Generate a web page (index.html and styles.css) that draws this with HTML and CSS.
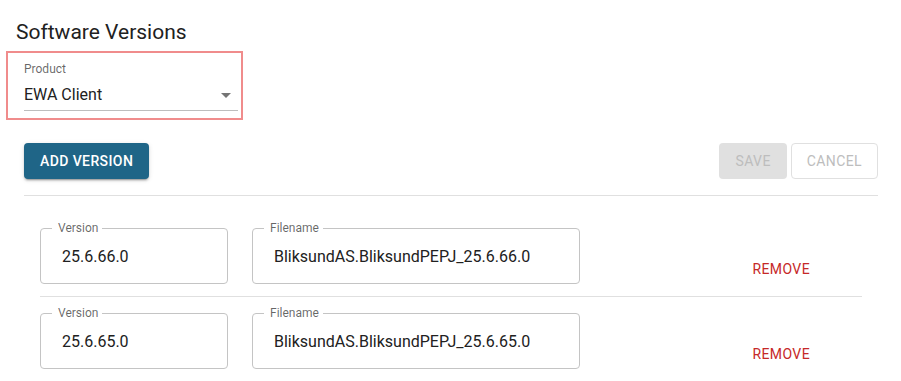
FILE: index.html
```html
<!DOCTYPE html>
<html lang="en">
<head>
<meta charset="utf-8">
<title>Software Versions</title>
<link rel="stylesheet" href="styles.css">
</head>
<body>
<div class="page">
  <h2 class="title">Software Versions</h2>
  <div class="product-box">
    <div class="select-label">Product</div>
    <div class="select-row">
      <span class="select-value">EWA Client</span>
      <svg class="select-arrow" viewBox="0 0 24 24" width="24" height="24" aria-hidden="true"><path d="M7 10l5 5 5-5z"/></svg>
    </div>
  </div>
  <div class="content">
    <div class="toolbar">
      <button class="btn btn-primary">Add version</button>
      <div class="toolbar-right">
        <button class="btn btn-disabled">Save</button>
        <button class="btn btn-outlined">Cancel</button>
      </div>
    </div>
    <div class="rows">
      <div class="row">
        <div class="field field-version">
          <span class="field-label">Version</span>
          <span class="field-value">25.6.66.0</span>
        </div>
        <div class="field field-filename">
          <span class="field-label">Filename</span>
          <span class="field-value">BliksundAS.BliksundPEPJ_25.6.66.0</span>
        </div>
        <button class="btn btn-remove">Remove</button>
      </div>
      <div class="row">
        <div class="field field-version">
          <span class="field-label">Version</span>
          <span class="field-value">25.6.65.0</span>
        </div>
        <div class="field field-filename">
          <span class="field-label">Filename</span>
          <span class="field-value">BliksundAS.BliksundPEPJ_25.6.65.0</span>
        </div>
        <button class="btn btn-remove">Remove</button>
      </div>
    </div>
  </div>
</div>
</body>
</html>
```

FILE: styles.css
```css
* { box-sizing: border-box; }

html, body {
  margin: 0;
  padding: 0;
  background: #ffffff;
  font-family: Roboto, "Liberation Sans", Arial, sans-serif;
  color: rgba(0, 0, 0, 0.87);
  overflow: hidden;
}

.page {
  padding: 16px 23px 0 6px;
}

.title {
  margin: 0 0 3px 10px;
  font-size: 21px;
  font-weight: 400;
  line-height: 32px;
  color: #212121;
}

.product-box {
  width: 237px;
  border: 2px solid #f08c8c;
  padding: 8px 3px 7px 16px;
}

.select-label {
  font-size: 12px;
  line-height: 16px;
  color: rgba(0, 0, 0, 0.6);
}

.select-row {
  margin-top: 5px;
  display: flex;
  align-items: flex-start;
  justify-content: space-between;
  padding-top: 1px;
  padding-bottom: 4px;
  border-bottom: 1px solid #bdbdbd;
  height: 29px;
}

.select-value {
  font-size: 16px;
  line-height: 23px;
  color: #212121;
}

.select-arrow {
  fill: #757575;
  flex: none;
}

.content {
  padding-left: 18px;
}

.toolbar {
  margin-top: 23px;
  display: flex;
  justify-content: space-between;
  align-items: center;
  padding-bottom: 16px;
  border-bottom: 1px solid #e0e0e0;
}

.toolbar-right {
  display: flex;
  gap: 4px;
}

.btn {
  font-family: Roboto, "Liberation Sans", Arial, sans-serif;
  font-size: 14px;
  font-weight: 500;
  line-height: 24px;
  letter-spacing: 0.4px;
  text-transform: uppercase;
  border: none;
  border-radius: 4px;
  background: transparent;
  height: 36px;
  padding: 6px 16px;
  cursor: pointer;
}

.btn-primary {
  background: #1f6587;
  color: #ffffff;
  box-shadow: 0 3px 1px -2px rgba(0, 0, 0, 0.2), 0 2px 2px 0 rgba(0, 0, 0, 0.14), 0 1px 5px 0 rgba(0, 0, 0, 0.12);
}

.btn-disabled {
  background: #e0e0e0;
  color: #bdbdbd;
  font-weight: 400;
  padding: 6px 16px;
}

.btn-outlined {
  border: 1px solid #e0e0e0;
  color: #bdbdbd;
  font-weight: 400;
  padding: 5px 15px;
}

.rows {
  padding: 16px 16px 0;
}

.row {
  display: flex;
  align-items: flex-start;
  gap: 24px;
  padding: 16px 0 12px;
  border-bottom: 1px solid #e0e0e0;
}

.field {
  position: relative;
  height: 56px;
  border: 1px solid #c4c4c4;
  border-radius: 4px;
  display: flex;
  align-items: center;
  padding-left: 21px;
}

.field-version { width: 188px; }
.field-filename { width: 328px; }

.field-label {
  position: absolute;
  top: -9px;
  left: 11px;
  padding: 0 4px 0 6px;
  background: #ffffff;
  font-size: 12px;
  line-height: 16px;
  color: rgba(0, 0, 0, 0.6);
}

.field-value {
  font-size: 16px;
  line-height: 23px;
  color: #212121;
}

.btn-remove {
  margin-left: auto;
  margin-right: 44px;
  align-self: flex-end;
  padding: 9px 8px 3px;
  font-weight: 400;
  color: #c62828;
  border-radius: 4px;
}
```
